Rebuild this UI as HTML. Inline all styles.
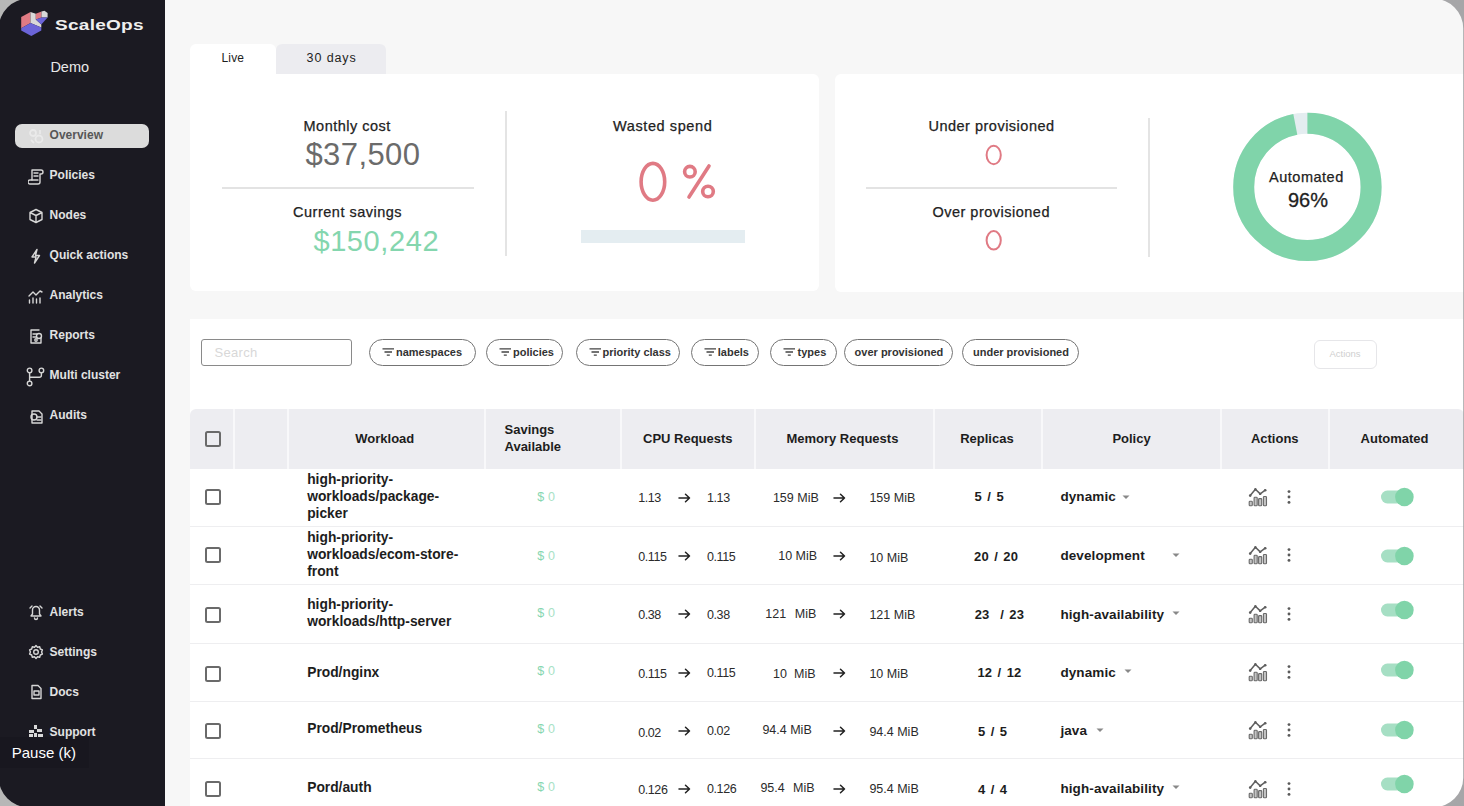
<!DOCTYPE html>
<html><head><meta charset="utf-8">
<style>
*{margin:0;padding:0;box-sizing:border-box}
html,body{width:1464px;height:806px;overflow:hidden;background:linear-gradient(135deg,#b5b5b5,#a3a3a5);font-family:"Liberation Sans",sans-serif}
#frame{position:absolute;left:0;top:0;width:1464px;height:806px;overflow:hidden;background:#f7f7f7}
.r{position:absolute}
.t{position:absolute;white-space:nowrap;line-height:1}
.cb{position:absolute;left:205px;width:16px;height:16px;border:2px solid #6a6a6a;border-radius:2.5px}
</style></head><body>
<div id="frame">
<svg width="0" height="0" style="position:absolute"><defs>

</defs></svg>
<div class="r" style="left:0px;top:0px;width:165px;height:806px;background:#1b1a22;"></div>
<svg class="r" style="left:0px;top:0px" width="60" height="45" viewBox="0 0 60 45">
<polygon points="21.2,17.1 30.5,12.0 30.5,23 21.2,28.3" fill="#e07b84"/>
<polygon points="30.5,12.0 35.8,13.8 35.8,19.5 41.3,24.6 41.3,27.5 30.5,23" fill="#d8d8d8"/>
<polygon points="35.8,13.8 41.5,11.5 41.5,17.5 35.8,19.5" fill="#e07b84"/>
<polygon points="41.5,11.5 44.5,10.8 47.6,13 47.6,17.5 41.5,17.5" fill="#d8d8d8"/>
<polygon points="35.8,19.5 41.5,17.5 47.6,17.5 41.3,24.6" fill="#6b64d8"/>
<polygon points="21.2,28.3 30.5,23 41.3,27.5 41.3,30.5 31.3,36.1 21.2,30.5" fill="#6b64d8"/>
</svg>
<div class="t" style="left:55.0px;top:17.1px;font-size:15px;color:#efefef;font-weight:bold;transform:scaleX(1.27);transform-origin:0 0;letter-spacing:0.2px">ScaleOps</div>
<div class="t" style="left:50.4px;top:59.7px;font-size:14.5px;color:#e8e8e8;">Demo</div>
<div class="r" style="left:15px;top:124px;width:134px;height:24px;background:#dcdcdc;border-radius:7px"></div>
<div class="t" style="left:49.6px;top:129.4px;font-size:12px;color:#575757;font-weight:bold;">Overview</div>
<div class="t" style="left:49.6px;top:168.9px;font-size:12px;color:#e2e2e2;font-weight:bold;">Policies</div>
<div class="t" style="left:49.6px;top:208.9px;font-size:12px;color:#e2e2e2;font-weight:bold;">Nodes</div>
<div class="t" style="left:49.6px;top:248.9px;font-size:12px;color:#e2e2e2;font-weight:bold;">Quick actions</div>
<div class="t" style="left:49.6px;top:288.9px;font-size:12px;color:#e2e2e2;font-weight:bold;">Analytics</div>
<div class="t" style="left:49.6px;top:328.9px;font-size:12px;color:#e2e2e2;font-weight:bold;">Reports</div>
<div class="t" style="left:49.6px;top:368.9px;font-size:12px;color:#e2e2e2;font-weight:bold;">Multi cluster</div>
<div class="t" style="left:49.6px;top:408.9px;font-size:12px;color:#e2e2e2;font-weight:bold;">Audits</div>
<div class="t" style="left:49.6px;top:605.8px;font-size:12px;color:#e2e2e2;font-weight:bold;">Alerts</div>
<div class="t" style="left:49.6px;top:645.8px;font-size:12px;color:#e2e2e2;font-weight:bold;">Settings</div>
<div class="t" style="left:49.6px;top:685.8px;font-size:12px;color:#e2e2e2;font-weight:bold;">Docs</div>
<div class="t" style="left:49.6px;top:725.8px;font-size:12px;color:#e2e2e2;font-weight:bold;">Support</div>
<svg class="r" style="left:28px;top:128px" width="20" height="20" viewBox="0 0 20 20"><g fill="none" stroke="#f0f0f0" stroke-width="1.8" opacity="0.7"><circle cx="5" cy="5" r="3"/><circle cx="11" cy="11" r="3.5"/><path d="M3 12 l3 3 M12 2 v4"/></g></svg>
<svg class="r" style="left:28px;top:168px" width="20" height="20" viewBox="0 0 20 20"><g fill="none" stroke="#d6d6d6" stroke-width="1.4" stroke-linecap="round" stroke-linejoin="round"><path d="M4 2 h9 a2 2 0 0 1 0 4 h-1 v8 a2 2 0 0 1 -2 2 h-8 a2 2 0 0 1 0 -4 h2 z"/><path d="M6 5 h4 M6 8 h4 M4 12 h6"/></g></svg>
<svg class="r" style="left:28px;top:208px" width="20" height="20" viewBox="0 0 20 20"><g fill="none" stroke="#d6d6d6" stroke-width="1.4" stroke-linecap="round" stroke-linejoin="round"><path d="M8 1.5 l6 3 v7 l-6 3 l-6 -3 v-7 z M2 4.5 l6 3 l6 -3 M8 7.5 v7"/></g></svg>
<svg class="r" style="left:28px;top:248px" width="20" height="20" viewBox="0 0 20 20"><g fill="none" stroke="#d6d6d6" stroke-width="1.4" stroke-linecap="round" stroke-linejoin="round"><path d="M9 1.5 l-5 7.5 h4 l-1.5 6 l5 -7.5 h-4 z"/></g></svg>
<svg class="r" style="left:27px;top:288px" width="20" height="20" viewBox="0 0 20 20"><g fill="none" stroke="#d6d6d6" stroke-width="1.4" stroke-linecap="round" stroke-linejoin="round"><path d="M2 8 l4 -4 l3 3 l4 -4 l2 1"/><path d="M2.5 15 v-3 M6 15 v-5 M9.5 15 v-4 M13 15 v-5"/></g></svg>
<svg class="r" style="left:28px;top:328px" width="20" height="20" viewBox="0 0 20 20"><g fill="none" stroke="#d6d6d6" stroke-width="1.4" stroke-linecap="round" stroke-linejoin="round"><path d="M11 2 h-8 v13 h10 v-5"/><path d="M5 6 h4 M5 9 h3"/><circle cx="11" cy="8" r="2.5"/><circle cx="8" cy="12" r="1.2"/></g></svg>
<svg class="r" style="left:26px;top:367px" width="20" height="20" viewBox="0 0 20 20"><g fill="none" stroke="#d6d6d6" stroke-width="1.4" stroke-linecap="round" stroke-linejoin="round"><circle cx="3.6" cy="3.4" r="2.3"/><circle cx="15.4" cy="3.4" r="2.3"/><circle cx="3.6" cy="16.4" r="2.3"/><path d="M3.6 5.7 v8.4 M15.4 5.7 v2.6 a2 2 0 0 1 -2 2 h-9.8"/></g></svg>
<svg class="r" style="left:28px;top:408px" width="20" height="20" viewBox="0 0 20 20"><g fill="none" stroke="#d6d6d6" stroke-width="1.4" stroke-linecap="round" stroke-linejoin="round"><path d="M4 3 h7 l3 3 v9 h-10 z"/><circle cx="6" cy="9" r="3"/><path d="M9 12 h4 M9 9 h4"/></g></svg>
<svg class="r" style="left:28px;top:604px" width="20" height="20" viewBox="0 0 20 20"><g fill="none" stroke="#d6d6d6" stroke-width="1.4" stroke-linecap="round" stroke-linejoin="round"><path d="M3 12 h10 l-1.5 -2 v-4 a3.5 3.5 0 0 0 -7 0 v4 z M6.5 14 a1.5 1.5 0 0 0 3 0 M2 4 l2 -2 M14 4 l-2 -2"/></g></svg>
<svg class="r" style="left:28px;top:644px" width="20" height="20" viewBox="0 0 20 20"><g fill="none" stroke="#d6d6d6" stroke-width="1.4" stroke-linecap="round" stroke-linejoin="round"><circle cx="8" cy="8" r="2.3"/><path d="M8 1.5 l1.5 1.7 l2.2 -0.4 l0.6 2.2 l2.1 0.9 l-0.8 2.1 l0.8 2.1 l-2.1 0.9 l-0.6 2.2 l-2.2 -0.4 l-1.5 1.7 l-1.5 -1.7 l-2.2 0.4 l-0.6 -2.2 l-2.1 -0.9 l0.8 -2.1 l-0.8 -2.1 l2.1 -0.9 l0.6 -2.2 l2.2 0.4 z"/></g></svg>
<svg class="r" style="left:28px;top:684px" width="20" height="20" viewBox="0 0 20 20"><g fill="none" stroke="#d6d6d6" stroke-width="1.4" stroke-linecap="round" stroke-linejoin="round"><path d="M4 1.5 h6 l3 3 v10 h-9 z"/><path d="M6 7 h5 v4 h-5 z"/></g></svg>
<svg class="r" style="left:28px;top:724px" width="20" height="20" viewBox="0 0 20 20"><g fill="#d8d8d8"><rect x="6" y="1" width="3" height="4"/><rect x="1" y="6" width="5" height="3"/><rect x="9" y="5" width="5" height="3"/><rect x="1" y="10" width="4" height="3"/><rect x="6" y="9" width="3" height="4"/><rect x="10" y="10" width="5" height="3"/></g></svg>
<div class="r" style="left:0px;top:737px;width:89px;height:31px;background:rgba(0,0,0,0.08);"></div>
<div class="t" style="left:11.7px;top:744.6px;font-size:15px;color:#ffffff;">Pause (k)</div>
<div class="r" style="left:190px;top:44px;width:86px;height:60px;background:#fff;border-radius:6px 6px 0 0"></div>
<div class="r" style="left:275.5px;top:44px;width:110px;height:30px;background:#ececf0;border-radius:6px 6px 0 0"></div>
<div class="t" style="left:221.6px;top:52.3px;font-size:12px;color:#1e1e1e;letter-spacing:0.1px">Live</div>
<div class="t" style="left:306.6px;top:51.9px;font-size:12.5px;color:#1e1e1e;letter-spacing:0.9px">30 days</div>
<div class="r" style="left:190px;top:74px;width:629px;height:217px;background:#fff;border-radius:0 6px 6px 6px"></div>
<div class="t" style="left:47.2px;width:600px;text-align:center;top:119.1px;font-size:14.5px;color:#222;letter-spacing:0.5px;-webkit-text-stroke:0.25px #222">Monthly cost</div>
<div class="t" style="left:62.9px;width:600px;text-align:center;top:139.4px;font-size:31px;color:#6b6b6b;letter-spacing:0.4px">$37,500</div>
<div class="r" style="left:221.5px;top:186.5px;width:252px;height:2px;background:#e3e3e3;"></div>
<div class="t" style="left:47.6px;width:600px;text-align:center;top:204.9px;font-size:14.5px;color:#222;letter-spacing:0.5px;-webkit-text-stroke:0.25px #222">Current savings</div>
<div class="t" style="left:76.3px;width:600px;text-align:center;top:226.9px;font-size:29px;color:#84d6ae;letter-spacing:0.6px">$150,242</div>
<div class="r" style="left:504.5px;top:110.5px;width:2px;height:145px;background:#e4e4e4;"></div>
<div class="t" style="left:362.7px;width:600px;text-align:center;top:119.4px;font-size:14.5px;color:#222;letter-spacing:0.6px;-webkit-text-stroke:0.25px #222">Wasted spend</div>
<svg class="r" style="left:630px;top:155px" width="95" height="55" viewBox="630 155 95 55">
<g fill="none" stroke="#e07a84" stroke-width="3.6" stroke-linecap="round">
<ellipse cx="652.9" cy="181.8" rx="11.8" ry="18.4"/>
<circle cx="689.9" cy="171.7" r="5.3"/><circle cx="708" cy="191.5" r="5.3"/>
<path d="M689 197 L709 166"/></g></svg>
<div class="r" style="left:581px;top:229.5px;width:164px;height:13.5px;background:#e4edf1;"></div>
<div class="r" style="left:835px;top:74px;width:640px;height:218px;background:#fff;border-radius:6px"></div>
<div class="t" style="left:691.5px;width:600px;text-align:center;top:119.2px;font-size:14.5px;color:#222;letter-spacing:0.5px;-webkit-text-stroke:0.25px #222">Under provisioned</div>
<div class="t" style="left:691.2px;width:600px;text-align:center;top:204.9px;font-size:14.5px;color:#222;letter-spacing:0.5px;-webkit-text-stroke:0.25px #222">Over provisioned</div>
<svg class="r" style="left:980px;top:140px" width="28" height="115" viewBox="980 140 28 115">
<g fill="none" stroke="#e07a84" stroke-width="2.0"><ellipse cx="993.7" cy="155" rx="7.1" ry="9.2"/><ellipse cx="993.7" cy="240.3" rx="7.1" ry="9.2"/></g></svg>
<div class="r" style="left:866px;top:186.5px;width:251px;height:2px;background:#e3e3e3;"></div>
<div class="r" style="left:1147.5px;top:118px;width:2px;height:139px;background:#e4e4e4;"></div>
<svg class="r" style="left:1225px;top:105px" width="165" height="165" viewBox="1225 105 165 165">
<circle cx="1307.4" cy="186.9" r="63.7" fill="none" stroke="#e4edf0" stroke-width="21"/>
<circle cx="1307.4" cy="186.9" r="63.7" fill="none" stroke="#80d4aa" stroke-width="21" stroke-dasharray="387.43 400.24" transform="rotate(-90 1307.4 186.9)"/>
</svg>
<div class="t" style="left:1006.4px;width:600px;text-align:center;top:169.5px;font-size:14.5px;color:#222;letter-spacing:0.5px;-webkit-text-stroke:0.25px #222">Automated</div>
<div class="t" style="left:1008.0px;width:600px;text-align:center;top:189.8px;font-size:20px;color:#1e1e1e;-webkit-text-stroke:0.3px #1e1e1e">96%</div>
<div class="r" style="left:190px;top:318.7px;width:1290px;height:500px;background:#fff;"></div>
<div class="r" style="left:200.5px;top:339px;width:151px;height:27px;background:#fff;border:1.3px solid #8a8a8a;border-radius:3px"></div>
<div class="t" style="left:214.5px;top:346.3px;font-size:13px;color:#d8d8d8;letter-spacing:0.3px">Search</div>
<div class="r" style="left:369.4px;top:339px;width:106.2px;height:26.5px;background:transparent;border:1.25px solid #747474;border-radius:14px"></div>
<svg class="r" style="left:381.7px;top:347px" width="13" height="10" viewBox="0 0 13 10"><g stroke="#444" stroke-width="1.3"><path d="M0.5 1.8 h11.5 M2.5 5 h7.5 M4.8 8.2 h3"/></g></svg>
<div class="t" style="left:396.0px;top:346.9px;font-size:11px;color:#333;font-weight:bold;">namespaces</div>
<div class="r" style="left:486.2px;top:339px;width:77.3px;height:26.5px;background:transparent;border:1.25px solid #747474;border-radius:14px"></div>
<svg class="r" style="left:499.2px;top:347px" width="13" height="10" viewBox="0 0 13 10"><g stroke="#444" stroke-width="1.3"><path d="M0.5 1.8 h11.5 M2.5 5 h7.5 M4.8 8.2 h3"/></g></svg>
<div class="t" style="left:513.0px;top:346.9px;font-size:11px;color:#333;font-weight:bold;">policies</div>
<div class="r" style="left:575.7px;top:339px;width:104.3px;height:26.5px;background:transparent;border:1.25px solid #747474;border-radius:14px"></div>
<svg class="r" style="left:588.5px;top:347px" width="13" height="10" viewBox="0 0 13 10"><g stroke="#444" stroke-width="1.3"><path d="M0.5 1.8 h11.5 M2.5 5 h7.5 M4.8 8.2 h3"/></g></svg>
<div class="t" style="left:602.5px;top:346.9px;font-size:11px;color:#333;font-weight:bold;">priority class</div>
<div class="r" style="left:690.5px;top:339px;width:68.8px;height:26.5px;background:transparent;border:1.25px solid #747474;border-radius:14px"></div>
<svg class="r" style="left:703.9px;top:347px" width="13" height="10" viewBox="0 0 13 10"><g stroke="#444" stroke-width="1.3"><path d="M0.5 1.8 h11.5 M2.5 5 h7.5 M4.8 8.2 h3"/></g></svg>
<div class="t" style="left:717.8px;top:346.9px;font-size:11px;color:#333;font-weight:bold;">labels</div>
<div class="r" style="left:770.4px;top:339px;width:66.4px;height:26.5px;background:transparent;border:1.25px solid #747474;border-radius:14px"></div>
<svg class="r" style="left:783.2px;top:347px" width="13" height="10" viewBox="0 0 13 10"><g stroke="#444" stroke-width="1.3"><path d="M0.5 1.8 h11.5 M2.5 5 h7.5 M4.8 8.2 h3"/></g></svg>
<div class="t" style="left:797.6px;top:346.9px;font-size:11px;color:#333;font-weight:bold;">types</div>
<div class="r" style="left:843.9px;top:339px;width:108.9px;height:26.5px;background:transparent;border:1.25px solid #747474;border-radius:14px"></div>
<div class="t" style="left:854.6px;top:346.9px;font-size:11px;color:#333;font-weight:bold;">over provisioned</div>
<div class="r" style="left:962.2px;top:339px;width:117.0px;height:26.5px;background:transparent;border:1.25px solid #747474;border-radius:14px"></div>
<div class="t" style="left:973.0px;top:346.9px;font-size:11px;color:#333;font-weight:bold;">under provisioned</div>
<div class="r" style="left:1313.5px;top:339.5px;width:63px;height:29px;background:transparent;border:1.2px solid #e6e6e9;border-radius:6px"></div>
<div class="t" style="left:1045.0px;width:600px;text-align:center;top:349.0px;font-size:9.5px;color:#cfcfcf;">Actions</div>
<div class="r" style="left:190px;top:408.5px;width:1274px;height:60px;background:#ededf1;border-radius:6px 6px 0 0"></div>
<div class="r" style="left:233px;top:408.5px;width:2px;height:60px;background:#f8f8fa;"></div>
<div class="r" style="left:286.5px;top:408.5px;width:2px;height:60px;background:#f8f8fa;"></div>
<div class="r" style="left:484px;top:408.5px;width:2px;height:60px;background:#f8f8fa;"></div>
<div class="r" style="left:619.5px;top:408.5px;width:2px;height:60px;background:#f8f8fa;"></div>
<div class="r" style="left:753.5px;top:408.5px;width:2px;height:60px;background:#f8f8fa;"></div>
<div class="r" style="left:933px;top:408.5px;width:2px;height:60px;background:#f8f8fa;"></div>
<div class="r" style="left:1041px;top:408.5px;width:2px;height:60px;background:#f8f8fa;"></div>
<div class="r" style="left:1220px;top:408.5px;width:2px;height:60px;background:#f8f8fa;"></div>
<div class="r" style="left:1328px;top:408.5px;width:2px;height:60px;background:#f8f8fa;"></div>
<div class="cb" style="top:430.5px"></div>
<div class="t" style="left:355.3px;top:432.3px;font-size:13px;color:#1d1d1d;font-weight:bold;">Workload</div>
<div class="t" style="left:504.5px;top:422.6px;font-size:13px;color:#1d1d1d;font-weight:bold;">Savings</div>
<div class="t" style="left:504.5px;top:440.3px;font-size:13px;color:#1d1d1d;font-weight:bold;">Available</div>
<div class="t" style="left:643.0px;top:432.3px;font-size:13px;color:#1d1d1d;font-weight:bold;">CPU Requests</div>
<div class="t" style="left:786.4px;top:432.3px;font-size:13px;color:#1d1d1d;font-weight:bold;">Memory Requests</div>
<div class="t" style="left:960.2px;top:432.3px;font-size:13px;color:#1d1d1d;font-weight:bold;">Replicas</div>
<div class="t" style="left:1112.4px;top:432.3px;font-size:13px;color:#1d1d1d;font-weight:bold;">Policy</div>
<div class="t" style="left:1250.9px;top:432.3px;font-size:13px;color:#1d1d1d;font-weight:bold;">Actions</div>
<div class="t" style="left:1360.6px;top:432.3px;font-size:13px;color:#1d1d1d;font-weight:bold;">Automated</div>
<div class="cb" style="top:489px"></div>
<div class="t" style="left:307.2px;top:472.5px;font-size:13.8px;color:#1d1d1d;font-weight:bold;">high-priority-</div>
<div class="t" style="left:307.2px;top:489.9px;font-size:13.8px;color:#1d1d1d;font-weight:bold;">workloads/package-</div>
<div class="t" style="left:307.2px;top:506.8px;font-size:13.8px;color:#1d1d1d;font-weight:bold;">picker</div>
<div class="t" style="left:537.2px;top:490.7px;font-size:12.5px;color:#a8e2c6;letter-spacing:0.2px"><span style="color:#86d6b0">$</span> 0</div>
<div class="t" style="left:638.2px;top:492.4px;font-size:12.5px;color:#2b2b2b;letter-spacing:-0.4px">1.13</div>
<div class="t" style="left:707.0px;top:492.4px;font-size:12.5px;color:#2b2b2b;letter-spacing:-0.4px">1.13</div>
<svg class="r" style="left:678px;top:493px" width="13" height="10" viewBox="0 0 13 10"><g fill="none" stroke="#222" stroke-width="1.5" stroke-linecap="round" stroke-linejoin="round"><path d="M1 5 h10.5 M7.5 1.2 L11.5 5 L7.5 8.8"/></g></svg>
<svg class="r" style="left:832.5px;top:493px" width="13" height="10" viewBox="0 0 13 10"><g fill="none" stroke="#222" stroke-width="1.5" stroke-linecap="round" stroke-linejoin="round"><path d="M1 5 h10.5 M7.5 1.2 L11.5 5 L7.5 8.8"/></g></svg>
<div class="t" style="left:772.9px;top:491.8px;font-size:12.5px;color:#2b2b2b;letter-spacing:0px">159 MiB</div>
<div class="t" style="left:869.4px;top:491.8px;font-size:12.5px;color:#2b2b2b;letter-spacing:0px">159 MiB</div>
<div class="t" style="left:974.6px;top:490.0px;font-size:13px;color:#1d1d1d;font-weight:bold;word-spacing:1.5px;letter-spacing:0.2px">5 / 5</div>
<div class="t" style="left:1060.4px;top:490.1px;font-size:13.5px;color:#1d1d1d;font-weight:bold;letter-spacing:0.1px">dynamic</div>
<svg class="r" style="left:1122.1px;top:495.3px" width="8" height="5" viewBox="0 0 8 5"><path d="M0.5 0.5 h7 l-3.5 3.5 z" fill="#888"/></svg>
<svg class="r" style="left:1248px;top:487px" width="20" height="20" viewBox="0 0 20 20"><g fill="none" stroke="#5e5e5e" stroke-width="1.5" stroke-linecap="round" stroke-linejoin="round"><polyline points="2.2,8.6 7.4,2.3 12.2,6.9 17.2,3.2"/></g><g fill="#5e5e5e"><circle cx="2.2" cy="8.6" r="1.3"/><circle cx="7.4" cy="2.3" r="1.2"/><circle cx="12.2" cy="6.9" r="1.2"/><circle cx="17.2" cy="3.2" r="1.3"/></g><g fill="#c4c4c4" stroke="#6a6a6a" stroke-width="1.1"><rect x="1.2" y="14.2" width="3.1" height="4.6" rx="0.8"/><rect x="6.1" y="10.3" width="3.1" height="8.5" rx="0.8"/><rect x="10.6" y="11.6" width="3.1" height="7.2" rx="0.8"/><rect x="15.4" y="9.5" width="3.1" height="9.3" rx="0.8"/></g></svg>
<svg class="r" style="left:1286px;top:489px" width="6" height="16" viewBox="0 0 6 16"><g fill="#5a5a5a"><circle cx="3" cy="2.6" r="1.45"/><circle cx="3" cy="8" r="1.45"/><circle cx="3" cy="13.4" r="1.45"/></g></svg>
<svg class="r" style="left:1380px;top:487px" width="36" height="20" viewBox="0 0 36 20"><rect x="1" y="3.6" width="22" height="12.8" rx="6.4" fill="#a6dfc4"/><circle cx="24.4" cy="10" r="9.3" fill="#80d4a9"/></svg>
<div class="r" style="left:190px;top:526px;width:1274px;height:1px;background:#eeeef0;"></div>
<div class="cb" style="top:547px"></div>
<div class="t" style="left:307.2px;top:530.6px;font-size:13.8px;color:#1d1d1d;font-weight:bold;">high-priority-</div>
<div class="t" style="left:307.2px;top:548.0px;font-size:13.8px;color:#1d1d1d;font-weight:bold;">workloads/ecom-store-</div>
<div class="t" style="left:307.2px;top:565.2px;font-size:13.8px;color:#1d1d1d;font-weight:bold;">front</div>
<div class="t" style="left:537.2px;top:549.5px;font-size:12.5px;color:#a8e2c6;letter-spacing:0.2px"><span style="color:#86d6b0">$</span> 0</div>
<div class="t" style="left:638.2px;top:551.0px;font-size:12.5px;color:#2b2b2b;letter-spacing:-0.4px">0.115</div>
<div class="t" style="left:707.0px;top:551.0px;font-size:12.5px;color:#2b2b2b;letter-spacing:-0.4px">0.115</div>
<svg class="r" style="left:678px;top:551.3px" width="13" height="10" viewBox="0 0 13 10"><g fill="none" stroke="#222" stroke-width="1.5" stroke-linecap="round" stroke-linejoin="round"><path d="M1 5 h10.5 M7.5 1.2 L11.5 5 L7.5 8.8"/></g></svg>
<svg class="r" style="left:832.5px;top:551.3px" width="13" height="10" viewBox="0 0 13 10"><g fill="none" stroke="#222" stroke-width="1.5" stroke-linecap="round" stroke-linejoin="round"><path d="M1 5 h10.5 M7.5 1.2 L11.5 5 L7.5 8.8"/></g></svg>
<div class="t" style="left:778.2px;top:550.4px;font-size:12.5px;color:#2b2b2b;letter-spacing:0px">10 MiB</div>
<div class="t" style="left:869.4px;top:551.5px;font-size:12.5px;color:#2b2b2b;letter-spacing:0px">10 MiB</div>
<div class="t" style="left:974.0px;top:549.8px;font-size:13px;color:#1d1d1d;font-weight:bold;word-spacing:1.5px;letter-spacing:0.2px">20 / 20</div>
<div class="t" style="left:1060.4px;top:549.1px;font-size:13.5px;color:#1d1d1d;font-weight:bold;letter-spacing:0.1px">development</div>
<svg class="r" style="left:1172.1px;top:553px" width="8" height="5" viewBox="0 0 8 5"><path d="M0.5 0.5 h7 l-3.5 3.5 z" fill="#888"/></svg>
<svg class="r" style="left:1248px;top:545.3px" width="20" height="20" viewBox="0 0 20 20"><g fill="none" stroke="#5e5e5e" stroke-width="1.5" stroke-linecap="round" stroke-linejoin="round"><polyline points="2.2,8.6 7.4,2.3 12.2,6.9 17.2,3.2"/></g><g fill="#5e5e5e"><circle cx="2.2" cy="8.6" r="1.3"/><circle cx="7.4" cy="2.3" r="1.2"/><circle cx="12.2" cy="6.9" r="1.2"/><circle cx="17.2" cy="3.2" r="1.3"/></g><g fill="#c4c4c4" stroke="#6a6a6a" stroke-width="1.1"><rect x="1.2" y="14.2" width="3.1" height="4.6" rx="0.8"/><rect x="6.1" y="10.3" width="3.1" height="8.5" rx="0.8"/><rect x="10.6" y="11.6" width="3.1" height="7.2" rx="0.8"/><rect x="15.4" y="9.5" width="3.1" height="9.3" rx="0.8"/></g></svg>
<svg class="r" style="left:1286px;top:547.3px" width="6" height="16" viewBox="0 0 6 16"><g fill="#5a5a5a"><circle cx="3" cy="2.6" r="1.45"/><circle cx="3" cy="8" r="1.45"/><circle cx="3" cy="13.4" r="1.45"/></g></svg>
<svg class="r" style="left:1380px;top:545.7px" width="36" height="20" viewBox="0 0 36 20"><rect x="1" y="3.6" width="22" height="12.8" rx="6.4" fill="#a6dfc4"/><circle cx="24.4" cy="10" r="9.3" fill="#80d4a9"/></svg>
<div class="r" style="left:190px;top:584px;width:1274px;height:1px;background:#eeeef0;"></div>
<div class="cb" style="top:606.6px"></div>
<div class="t" style="left:307.2px;top:597.7px;font-size:13.8px;color:#1d1d1d;font-weight:bold;">high-priority-</div>
<div class="t" style="left:307.2px;top:614.6px;font-size:13.8px;color:#1d1d1d;font-weight:bold;">workloads/http-server</div>
<div class="t" style="left:537.2px;top:606.9px;font-size:12.5px;color:#a8e2c6;letter-spacing:0.2px"><span style="color:#86d6b0">$</span> 0</div>
<div class="t" style="left:638.2px;top:608.9px;font-size:12.5px;color:#2b2b2b;letter-spacing:-0.4px">0.38</div>
<div class="t" style="left:707.0px;top:608.9px;font-size:12.5px;color:#2b2b2b;letter-spacing:-0.4px">0.38</div>
<svg class="r" style="left:678px;top:609px" width="13" height="10" viewBox="0 0 13 10"><g fill="none" stroke="#222" stroke-width="1.5" stroke-linecap="round" stroke-linejoin="round"><path d="M1 5 h10.5 M7.5 1.2 L11.5 5 L7.5 8.8"/></g></svg>
<svg class="r" style="left:832.5px;top:609px" width="13" height="10" viewBox="0 0 13 10"><g fill="none" stroke="#222" stroke-width="1.5" stroke-linecap="round" stroke-linejoin="round"><path d="M1 5 h10.5 M7.5 1.2 L11.5 5 L7.5 8.8"/></g></svg>
<div class="t" style="left:765.3px;top:607.8px;font-size:12.5px;color:#2b2b2b;letter-spacing:0px">121</div>
<div class="t" style="left:794.8px;top:607.8px;font-size:12.5px;color:#2b2b2b;letter-spacing:0px">MiB</div>
<div class="t" style="left:869.4px;top:608.9px;font-size:12.5px;color:#2b2b2b;letter-spacing:0px">121 MiB</div>
<div class="t" style="left:974.7px;top:608.0px;font-size:13px;color:#1d1d1d;font-weight:bold;word-spacing:1.5px;letter-spacing:0.2px">23 &nbsp;/ 23</div>
<div class="t" style="left:1060.4px;top:607.6px;font-size:13.5px;color:#1d1d1d;font-weight:bold;letter-spacing:0.1px">high-availability</div>
<svg class="r" style="left:1172.1px;top:610.5px" width="8" height="5" viewBox="0 0 8 5"><path d="M0.5 0.5 h7 l-3.5 3.5 z" fill="#888"/></svg>
<svg class="r" style="left:1248px;top:603.6px" width="20" height="20" viewBox="0 0 20 20"><g fill="none" stroke="#5e5e5e" stroke-width="1.5" stroke-linecap="round" stroke-linejoin="round"><polyline points="2.2,8.6 7.4,2.3 12.2,6.9 17.2,3.2"/></g><g fill="#5e5e5e"><circle cx="2.2" cy="8.6" r="1.3"/><circle cx="7.4" cy="2.3" r="1.2"/><circle cx="12.2" cy="6.9" r="1.2"/><circle cx="17.2" cy="3.2" r="1.3"/></g><g fill="#c4c4c4" stroke="#6a6a6a" stroke-width="1.1"><rect x="1.2" y="14.2" width="3.1" height="4.6" rx="0.8"/><rect x="6.1" y="10.3" width="3.1" height="8.5" rx="0.8"/><rect x="10.6" y="11.6" width="3.1" height="7.2" rx="0.8"/><rect x="15.4" y="9.5" width="3.1" height="9.3" rx="0.8"/></g></svg>
<svg class="r" style="left:1286px;top:605.6px" width="6" height="16" viewBox="0 0 6 16"><g fill="#5a5a5a"><circle cx="3" cy="2.6" r="1.45"/><circle cx="3" cy="8" r="1.45"/><circle cx="3" cy="13.4" r="1.45"/></g></svg>
<svg class="r" style="left:1380px;top:599.5px" width="36" height="20" viewBox="0 0 36 20"><rect x="1" y="3.6" width="22" height="12.8" rx="6.4" fill="#a6dfc4"/><circle cx="24.4" cy="10" r="9.3" fill="#80d4a9"/></svg>
<div class="r" style="left:190px;top:643px;width:1274px;height:1px;background:#eeeef0;"></div>
<div class="cb" style="top:665.5px"></div>
<div class="t" style="left:307.2px;top:665.9px;font-size:13.8px;color:#1d1d1d;font-weight:bold;">Prod/nginx</div>
<div class="t" style="left:537.2px;top:665.2px;font-size:12.5px;color:#a8e2c6;letter-spacing:0.2px"><span style="color:#86d6b0">$</span> 0</div>
<div class="t" style="left:638.2px;top:668.1px;font-size:12.5px;color:#2b2b2b;letter-spacing:-0.4px">0.115</div>
<div class="t" style="left:707.0px;top:666.7px;font-size:12.5px;color:#2b2b2b;letter-spacing:-0.4px">0.115</div>
<svg class="r" style="left:678px;top:668px" width="13" height="10" viewBox="0 0 13 10"><g fill="none" stroke="#222" stroke-width="1.5" stroke-linecap="round" stroke-linejoin="round"><path d="M1 5 h10.5 M7.5 1.2 L11.5 5 L7.5 8.8"/></g></svg>
<svg class="r" style="left:832.5px;top:668px" width="13" height="10" viewBox="0 0 13 10"><g fill="none" stroke="#222" stroke-width="1.5" stroke-linecap="round" stroke-linejoin="round"><path d="M1 5 h10.5 M7.5 1.2 L11.5 5 L7.5 8.8"/></g></svg>
<div class="t" style="left:773.0px;top:667.5px;font-size:12.5px;color:#2b2b2b;letter-spacing:0px">10</div>
<div class="t" style="left:794.0px;top:667.5px;font-size:12.5px;color:#2b2b2b;letter-spacing:0px">MiB</div>
<div class="t" style="left:869.4px;top:667.5px;font-size:12.5px;color:#2b2b2b;letter-spacing:0px">10 MiB</div>
<div class="t" style="left:977.4px;top:666.3px;font-size:13px;color:#1d1d1d;font-weight:bold;word-spacing:1.5px;letter-spacing:0.2px">12 / 12</div>
<div class="t" style="left:1060.4px;top:666.1px;font-size:13.5px;color:#1d1d1d;font-weight:bold;letter-spacing:0.1px">dynamic</div>
<svg class="r" style="left:1124.2px;top:668.7px" width="8" height="5" viewBox="0 0 8 5"><path d="M0.5 0.5 h7 l-3.5 3.5 z" fill="#888"/></svg>
<svg class="r" style="left:1248px;top:661.8px" width="20" height="20" viewBox="0 0 20 20"><g fill="none" stroke="#5e5e5e" stroke-width="1.5" stroke-linecap="round" stroke-linejoin="round"><polyline points="2.2,8.6 7.4,2.3 12.2,6.9 17.2,3.2"/></g><g fill="#5e5e5e"><circle cx="2.2" cy="8.6" r="1.3"/><circle cx="7.4" cy="2.3" r="1.2"/><circle cx="12.2" cy="6.9" r="1.2"/><circle cx="17.2" cy="3.2" r="1.3"/></g><g fill="#c4c4c4" stroke="#6a6a6a" stroke-width="1.1"><rect x="1.2" y="14.2" width="3.1" height="4.6" rx="0.8"/><rect x="6.1" y="10.3" width="3.1" height="8.5" rx="0.8"/><rect x="10.6" y="11.6" width="3.1" height="7.2" rx="0.8"/><rect x="15.4" y="9.5" width="3.1" height="9.3" rx="0.8"/></g></svg>
<svg class="r" style="left:1286px;top:663.8px" width="6" height="16" viewBox="0 0 6 16"><g fill="#5a5a5a"><circle cx="3" cy="2.6" r="1.45"/><circle cx="3" cy="8" r="1.45"/><circle cx="3" cy="13.4" r="1.45"/></g></svg>
<svg class="r" style="left:1380px;top:659.7px" width="36" height="20" viewBox="0 0 36 20"><rect x="1" y="3.6" width="22" height="12.8" rx="6.4" fill="#a6dfc4"/><circle cx="24.4" cy="10" r="9.3" fill="#80d4a9"/></svg>
<div class="r" style="left:190px;top:701px;width:1274px;height:1px;background:#eeeef0;"></div>
<div class="cb" style="top:723px"></div>
<div class="t" style="left:307.2px;top:722.0px;font-size:13.8px;color:#1d1d1d;font-weight:bold;">Prod/Prometheus</div>
<div class="t" style="left:537.2px;top:723.2px;font-size:12.5px;color:#a8e2c6;letter-spacing:0.2px"><span style="color:#86d6b0">$</span> 0</div>
<div class="t" style="left:638.2px;top:726.9px;font-size:12.5px;color:#2b2b2b;letter-spacing:-0.4px">0.02</div>
<div class="t" style="left:707.0px;top:724.9px;font-size:12.5px;color:#2b2b2b;letter-spacing:-0.4px">0.02</div>
<svg class="r" style="left:678px;top:726px" width="13" height="10" viewBox="0 0 13 10"><g fill="none" stroke="#222" stroke-width="1.5" stroke-linecap="round" stroke-linejoin="round"><path d="M1 5 h10.5 M7.5 1.2 L11.5 5 L7.5 8.8"/></g></svg>
<svg class="r" style="left:832.5px;top:726px" width="13" height="10" viewBox="0 0 13 10"><g fill="none" stroke="#222" stroke-width="1.5" stroke-linecap="round" stroke-linejoin="round"><path d="M1 5 h10.5 M7.5 1.2 L11.5 5 L7.5 8.8"/></g></svg>
<div class="t" style="left:762.4px;top:724.0px;font-size:12.5px;color:#2b2b2b;letter-spacing:0px">94.4 MiB</div>
<div class="t" style="left:869.4px;top:725.9px;font-size:12.5px;color:#2b2b2b;letter-spacing:0px">94.4 MiB</div>
<div class="t" style="left:978.0px;top:724.5px;font-size:13px;color:#1d1d1d;font-weight:bold;word-spacing:1.5px;letter-spacing:0.2px">5 / 5</div>
<div class="t" style="left:1060.4px;top:724.1px;font-size:13.5px;color:#1d1d1d;font-weight:bold;letter-spacing:0.1px">java</div>
<svg class="r" style="left:1096.1px;top:727.6px" width="8" height="5" viewBox="0 0 8 5"><path d="M0.5 0.5 h7 l-3.5 3.5 z" fill="#888"/></svg>
<svg class="r" style="left:1248px;top:720px" width="20" height="20" viewBox="0 0 20 20"><g fill="none" stroke="#5e5e5e" stroke-width="1.5" stroke-linecap="round" stroke-linejoin="round"><polyline points="2.2,8.6 7.4,2.3 12.2,6.9 17.2,3.2"/></g><g fill="#5e5e5e"><circle cx="2.2" cy="8.6" r="1.3"/><circle cx="7.4" cy="2.3" r="1.2"/><circle cx="12.2" cy="6.9" r="1.2"/><circle cx="17.2" cy="3.2" r="1.3"/></g><g fill="#c4c4c4" stroke="#6a6a6a" stroke-width="1.1"><rect x="1.2" y="14.2" width="3.1" height="4.6" rx="0.8"/><rect x="6.1" y="10.3" width="3.1" height="8.5" rx="0.8"/><rect x="10.6" y="11.6" width="3.1" height="7.2" rx="0.8"/><rect x="15.4" y="9.5" width="3.1" height="9.3" rx="0.8"/></g></svg>
<svg class="r" style="left:1286px;top:722px" width="6" height="16" viewBox="0 0 6 16"><g fill="#5a5a5a"><circle cx="3" cy="2.6" r="1.45"/><circle cx="3" cy="8" r="1.45"/><circle cx="3" cy="13.4" r="1.45"/></g></svg>
<svg class="r" style="left:1380px;top:720.3px" width="36" height="20" viewBox="0 0 36 20"><rect x="1" y="3.6" width="22" height="12.8" rx="6.4" fill="#a6dfc4"/><circle cx="24.4" cy="10" r="9.3" fill="#80d4a9"/></svg>
<div class="r" style="left:190px;top:758px;width:1274px;height:1px;background:#eeeef0;"></div>
<div class="cb" style="top:781.3px"></div>
<div class="t" style="left:307.2px;top:780.9px;font-size:13.8px;color:#1d1d1d;font-weight:bold;">Pord/auth</div>
<div class="t" style="left:537.2px;top:781.4px;font-size:12.5px;color:#a8e2c6;letter-spacing:0.2px"><span style="color:#86d6b0">$</span> 0</div>
<div class="t" style="left:638.2px;top:784.3px;font-size:12.5px;color:#2b2b2b;letter-spacing:-0.4px">0.126</div>
<div class="t" style="left:707.0px;top:782.9px;font-size:12.5px;color:#2b2b2b;letter-spacing:-0.4px">0.126</div>
<svg class="r" style="left:678px;top:784px" width="13" height="10" viewBox="0 0 13 10"><g fill="none" stroke="#222" stroke-width="1.5" stroke-linecap="round" stroke-linejoin="round"><path d="M1 5 h10.5 M7.5 1.2 L11.5 5 L7.5 8.8"/></g></svg>
<svg class="r" style="left:832.5px;top:784px" width="13" height="10" viewBox="0 0 13 10"><g fill="none" stroke="#222" stroke-width="1.5" stroke-linecap="round" stroke-linejoin="round"><path d="M1 5 h10.5 M7.5 1.2 L11.5 5 L7.5 8.8"/></g></svg>
<div class="t" style="left:760.4px;top:782.3px;font-size:12.5px;color:#2b2b2b;letter-spacing:0px">95.4</div>
<div class="t" style="left:793.0px;top:782.3px;font-size:12.5px;color:#2b2b2b;letter-spacing:0px">MiB</div>
<div class="t" style="left:869.4px;top:783.4px;font-size:12.5px;color:#2b2b2b;letter-spacing:0px">95.4 MiB</div>
<div class="t" style="left:978.0px;top:782.7px;font-size:13px;color:#1d1d1d;font-weight:bold;word-spacing:1.5px;letter-spacing:0.2px">4 / 4</div>
<div class="t" style="left:1060.4px;top:782.1px;font-size:13.5px;color:#1d1d1d;font-weight:bold;letter-spacing:0.1px">high-availability</div>
<svg class="r" style="left:1172.1px;top:785px" width="8" height="5" viewBox="0 0 8 5"><path d="M0.5 0.5 h7 l-3.5 3.5 z" fill="#888"/></svg>
<svg class="r" style="left:1248px;top:778.5px" width="20" height="20" viewBox="0 0 20 20"><g fill="none" stroke="#5e5e5e" stroke-width="1.5" stroke-linecap="round" stroke-linejoin="round"><polyline points="2.2,8.6 7.4,2.3 12.2,6.9 17.2,3.2"/></g><g fill="#5e5e5e"><circle cx="2.2" cy="8.6" r="1.3"/><circle cx="7.4" cy="2.3" r="1.2"/><circle cx="12.2" cy="6.9" r="1.2"/><circle cx="17.2" cy="3.2" r="1.3"/></g><g fill="#c4c4c4" stroke="#6a6a6a" stroke-width="1.1"><rect x="1.2" y="14.2" width="3.1" height="4.6" rx="0.8"/><rect x="6.1" y="10.3" width="3.1" height="8.5" rx="0.8"/><rect x="10.6" y="11.6" width="3.1" height="7.2" rx="0.8"/><rect x="15.4" y="9.5" width="3.1" height="9.3" rx="0.8"/></g></svg>
<svg class="r" style="left:1286px;top:780.5px" width="6" height="16" viewBox="0 0 6 16"><g fill="#5a5a5a"><circle cx="3" cy="2.6" r="1.45"/><circle cx="3" cy="8" r="1.45"/><circle cx="3" cy="13.4" r="1.45"/></g></svg>
<svg class="r" style="left:1380px;top:774.1px" width="36" height="20" viewBox="0 0 36 20"><rect x="1" y="3.6" width="22" height="12.8" rx="6.4" fill="#a6dfc4"/><circle cx="24.4" cy="10" r="9.3" fill="#80d4a9"/></svg>
<svg class="r" style="left:0;top:0" width="1464" height="806" viewBox="0 0 1464 806"><defs><linearGradient id="cg" x1="0" y1="0" x2="1" y2="0"><stop offset="0" stop-color="#b7b7b7"/><stop offset="1" stop-color="#a6a6a8"/></linearGradient></defs><path fill="url(#cg)" fill-rule="evenodd" d="M0 0H1464V806H0Z M28.3 -1.2 H1433.7 A29.5 29.5 0 0 1 1463.2 28.3 V777.7 A29.5 29.5 0 0 1 1433.7 807.2 H28.3 A29.5 29.5 0 0 1 -1.2 777.7 V28.3 A29.5 29.5 0 0 1 28.3 -1.2 Z"/></svg>
</div>
</body></html>
